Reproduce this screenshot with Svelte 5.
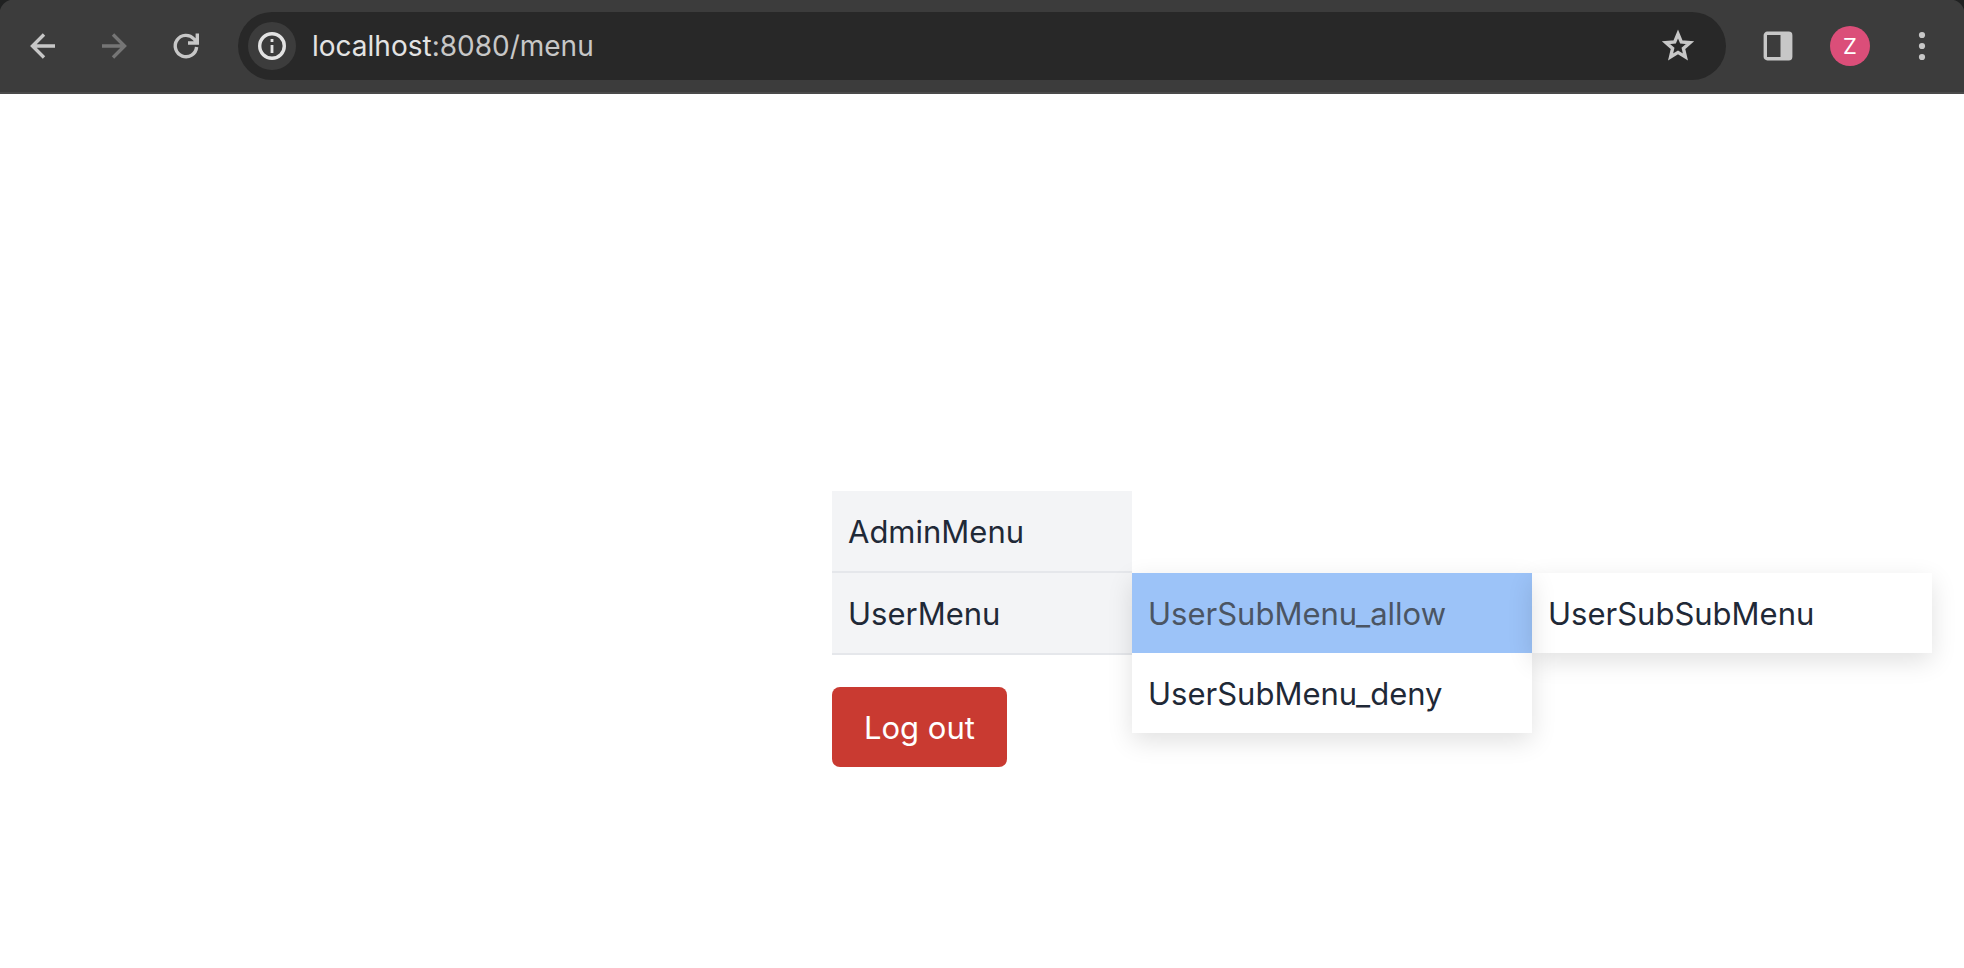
<script>
  const menu = [
    { label: 'AdminMenu' },
    {
      label: 'UserMenu',
      children: [
        { label: 'UserSubMenu_allow', active: true, children: [{ label: 'UserSubSubMenu' }] },
        { label: 'UserSubMenu_deny' },
      ],
    },
  ];
</script>

{#snippet items(list)}
  {#each list as item}
    <li>
      <a href="#{item.label}" class:active={item.active}>{item.label}</a>
      {#if item.children}
        <ul class="flyout">{@render items(item.children)}</ul>
      {/if}
    </li>
  {/each}
{/snippet}

<div class="window">
  <header class="toolbar">
    <nav class="history" aria-label="Browser navigation">
      <button aria-label="Back">
        <svg width="26" height="26" viewBox="0 0 26 26"><path d="M25 13H2.500M14 1.500 2.500 13 14 24.500" /></svg>
      </button>
      <button aria-label="Forward" class="dim">
        <svg width="26" height="26" viewBox="0 0 26 26"><path d="M1 13h22.500M12 1.500 23.500 13 12 24.500" /></svg>
      </button>
      <button aria-label="Reload">
        <svg width="28" height="28" viewBox="0 0 28 28"><path d="M24.600 15A10.700 10.700 0 1 1 22 7L25 10.300M25.300 1.500v9.500H16" /></svg>
      </button>
    </nav>
    <div class="omnibox">
      <button class="info" aria-label="View site information">
        <svg width="28" height="28" viewBox="0 0 28 28"><circle cx="14" cy="14" r="12.300" /><path class="thin" d="M14 13v8M14 7v3" /></svg>
      </button>
      <div class="url"><span>localhost</span>:8080/menu</div>
      <button aria-label="Bookmark this tab">
        <svg width="34" height="34" viewBox="0 0 34 34"><path d="M17 5l3.300 8 8.700.700-6.600 5.700 2 8.500L17 23.400l-7.400 4.500 2-8.500L5 13.700 13.700 13z" /></svg>
      </button>
    </div>
    <div class="actions">
      <button aria-label="Side panel">
        <svg width="30" height="30" viewBox="0 0 30 30"><rect x="2.300" y="2.300" width="25.400" height="25.400" rx="2" /><path class="solid" d="M17.500 1H26a3 3 0 0 1 3 3v22a3 3 0 0 1-3 3h-8.500z" /></svg>
      </button>
      <button class="avatar" aria-label="Profile">Z</button>
      <button aria-label="More">
        <svg width="8" height="30" viewBox="0 0 8 30"><g class="solid"><circle cx="4" cy="4" r="3.100" /><circle cx="4" cy="15" r="3.100" /><circle cx="4" cy="26" r="3.100" /></g></svg>
      </button>
    </div>
  </header>

  <main>
    <ul class="menu">{@render items(menu)}</ul>
    <button class="logout">Log out</button>
  </main>
</div>

<style>
  :global(body) {
    margin: 0;
    background: #fff;
  }
  .window {
    font-family: Inter, 'Liberation Sans', sans-serif;
    color: #1f2937;
    overflow-x: hidden;
  }
  button {
    font: inherit;
    color: inherit;
    background: none;
    border: 0;
    padding: 0;
    display: flex;
    align-items: center;
    justify-content: center;
  }
  svg {
    display: block;
    fill: none;
    stroke: currentColor;
    stroke-width: 3.4;
  }
  .thin {
    stroke-width: 2.8;
  }
  .solid {
    fill: currentColor;
    stroke: none;
  }
  .toolbar {
    display: flex;
    align-items: center;
    box-sizing: border-box;
    height: 94px;
    padding: 0 38px 0 30px;
    border-bottom: 2px solid #4a4a4a;
    background:
      radial-gradient(circle at 14px 14px, transparent 14px, #202121 15px) 0 0 / 14px 14px no-repeat,
      radial-gradient(circle at 0 14px, transparent 14px, #202121 15px) 100% 0 / 14px 14px no-repeat,
      #3c3c3c;
    color: #c7c7c7;
  }
  .history {
    display: flex;
    align-items: center;
    gap: 45px;
    margin-right: 38px;
  }
  .dim {
    color: #757575;
  }
  .omnibox {
    flex: 1;
    display: flex;
    align-items: center;
    height: 68px;
    padding: 0 31px 0 10px;
    box-sizing: border-box;
    border-radius: 34px;
    background: #282828;
  }
  .info {
    width: 48px;
    height: 48px;
    border-radius: 50%;
    background: #3c3c3c;
    color: #e3e3e3;
  }
  .url {
    flex: 1;
    margin-left: 16px;
    font-size: 28px;
  }
  .url span {
    color: #e3e3e3;
  }
  .actions {
    display: flex;
    align-items: center;
    gap: 37px;
    margin-left: 37px;
  }
  .avatar {
    width: 40px;
    height: 40px;
    border-radius: 50%;
    background: #db4e79;
    color: #fff;
    font-size: 22px;
  }
  .actions button:last-child {
    margin-left: 11px;
  }
  main {
    width: 300px;
    margin: 0 auto;
    padding: 397px 0 200px;
    font-size: 31px;
    line-height: 48px;
  }
  ul {
    list-style: none;
    margin: 0;
    padding: 0;
  }
  li {
    position: relative;
  }
  a {
    display: block;
    padding: 17px 16px 15px;
    color: inherit;
    text-decoration: none;
  }
  .menu > li {
    background: #f3f4f6;
    border-bottom: 2px solid #e5e7eb;
  }
  .flyout {
    position: absolute;
    top: 0;
    left: 100%;
    width: 400px;
    box-shadow: 0 8px 24px rgba(0, 0, 0, 0.12);
  }
  a.active {
    background: #9cc3f8;
    color: #4b5563;
  }
  .logout {
    margin-top: 32px;
    padding: 17px 32px 15px;
    border-radius: 8px;
    background: #c93a31;
    color: #fff;
  }
</style>
